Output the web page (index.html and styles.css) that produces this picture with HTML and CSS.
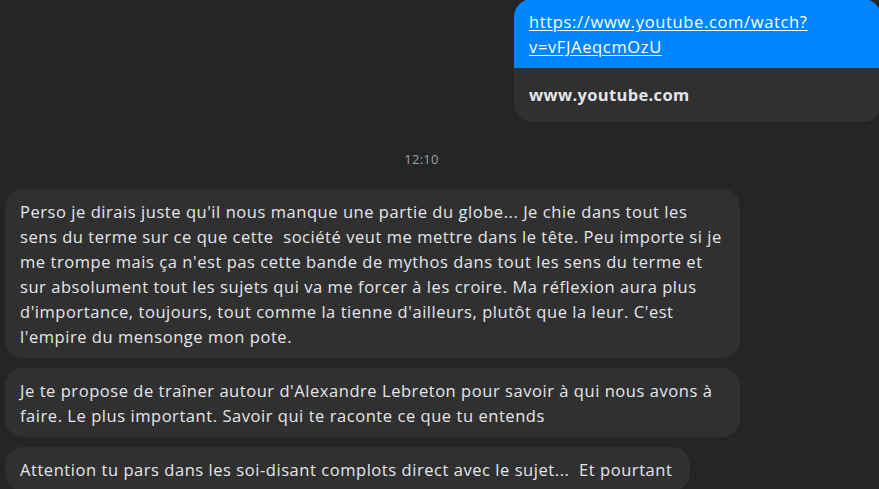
FILE: index.html
```html
<!DOCTYPE html>
<html lang="fr">
<head>
<meta charset="utf-8">
<title>Conversation</title>
<link rel="stylesheet" href="styles.css">
</head>
<body>
<main class="chat">
  <div class="row row-out">
    <div class="link-bubble">
      <div class="link-top">
        <a class="link-url" href="#">https://www.youtube.com/watch?<br>v=vFJAeqcmOzU</a>
      </div>
      <div class="link-meta">www.youtube.com</div>
    </div>
  </div>

  <div class="stamp">12:10</div>

  <div class="group-in">
    <div class="bubble bubble-full">Perso je dirais juste qu'il nous manque une partie du globe... Je chie dans tout les<br>sens du terme sur ce que cette &nbsp;société veut me mettre dans le tête. Peu importe si je<br>me trompe mais ça n'est pas cette bande de mythos dans tout les sens du terme et<br>sur absolument tout les sujets qui va me forcer à les croire. Ma réflexion aura plus<br>d'importance, toujours, tout comme la tienne d'ailleurs, plutôt que la leur. C'est<br>l'empire du mensonge mon pote.</div>
    <div class="bubble bubble-full">Je te propose de traîner autour d'Alexandre Lebreton pour savoir à qui nous avons à<br>faire. Le plus important. Savoir qui te raconte ce que tu entends</div>
    <div class="bubble">Attention tu pars dans les soi-disant complots direct avec le sujet... &nbsp;Et pourtant</div>
  </div>
</main>
</body>
</html>
```

FILE: styles.css
```css
* { box-sizing: border-box; }

html, body {
  margin: 0;
  padding: 0;
  background: #242526;
  height: 100%;
  overflow: hidden;
}

body {
  font-family: "Open Sans", "Noto Sans", "Liberation Sans", sans-serif;
  font-size: 16.5px;
  letter-spacing: 0.55px;
  line-height: 25px;
  color: #e4e6eb;
}

.chat {
  display: flex;
  flex-direction: column;
}

.row-out {
  display: flex;
  justify-content: flex-end;
  margin-right: -2px;
  margin-top: -1px;
}

.link-bubble {
  width: 367px;
  border-radius: 18px;
  overflow: hidden;
  background: #303030;
}

.link-top {
  background: #0084ff;
  padding: 10px 15px 9px;
  height: 69px;
}

.link-url {
  color: #ffffff;
  text-decoration: underline;
  text-underline-offset: 2px;
  letter-spacing: 0.65px;
}

.link-meta {
  height: 54px;
  padding: 14px 15px 0;
  font-weight: 700;
  letter-spacing: 0.35px;
}

.stamp {
  margin-top: 25px;
  padding-right: 36px;
  text-align: center;
  font-size: 13px;
  letter-spacing: 0.3px;
  line-height: 24px;
  color: #a0a0a0;
}

.group-in {
  display: flex;
  flex-direction: column;
  align-items: flex-start;
  gap: 10px;
  margin-top: 18px;
  padding-left: 5px;
}

.bubble {
  background: #303030;
  border-radius: 18px;
  padding: 10px 18px 9px 15px;
  white-space: nowrap;
}

.bubble-full {
  width: 735px;
}
```
